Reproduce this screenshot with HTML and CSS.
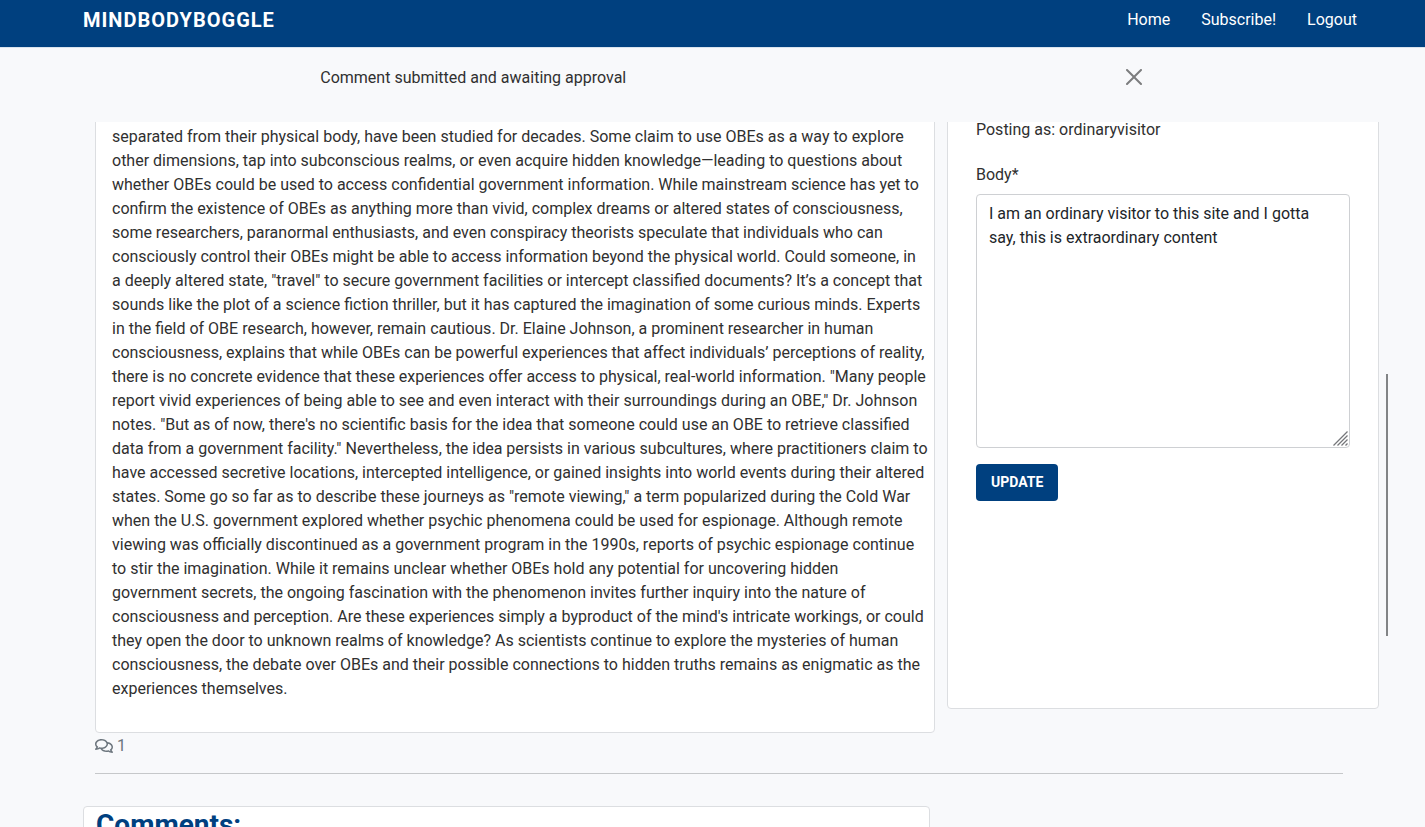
FILE: index.html
```html
<!DOCTYPE html>
<html lang="en">
<head>
<meta charset="utf-8">
<meta name="viewport" content="width=device-width, initial-scale=1">
<title>MINDBODYBOGGLE</title>
<link rel="stylesheet" href="styles.css">
</head>
<body>
<header class="navbar">
  <a class="brand" href="#">MINDBODYBOGGLE</a>
  <nav class="nav-links">
    <a href="#">Home</a>
    <a href="#">Subscribe!</a>
    <a href="#">Logout</a>
  </nav>
</header>
<div class="alert" role="alert">
  <span>Comment submitted and awaiting approval</span>
  <button class="close" type="button" aria-label="Close">
    <svg width="16" height="16" viewBox="0 0 16 16" fill="currentColor"><path d="M.293.293a1 1 0 0 1 1.414 0L8 6.586 14.293.293a1 1 0 1 1 1.414 1.414L9.414 8l6.293 6.293a1 1 0 0 1-1.414 1.414L8 9.414l-6.293 6.293a1 1 0 0 1-1.414-1.414L6.586 8 .293 1.707a1 1 0 0 1 0-1.414z"/></svg>
  </button>
</div>
<main class="content">
  <div class="columns">
    <article class="card post">
      <p>separated from their physical body, have been studied for decades. Some claim to use OBEs as a way to explore<br>
      other dimensions, tap into subconscious realms, or even acquire hidden knowledge—leading to questions about<br>
      whether OBEs could be used to access confidential government information. While mainstream science has yet to<br>
      confirm the existence of OBEs as anything more than vivid, complex dreams or altered states of consciousness,<br>
      some researchers, paranormal enthusiasts, and even conspiracy theorists speculate that individuals who can<br>
      consciously control their OBEs might be able to access information beyond the physical world. Could someone, in<br>
      a deeply altered state, "travel" to secure government facilities or intercept classified documents? It’s a concept that<br>
      sounds like the plot of a science fiction thriller, but it has captured the imagination of some curious minds. Experts<br>
      in the field of OBE research, however, remain cautious. Dr. Elaine Johnson, a prominent researcher in human<br>
      consciousness, explains that while OBEs can be powerful experiences that affect individuals’ perceptions of reality,<br>
      there is no concrete evidence that these experiences offer access to physical, real-world information. "Many people<br>
      report vivid experiences of being able to see and even interact with their surroundings during an OBE," Dr. Johnson<br>
      notes. "But as of now, there's no scientific basis for the idea that someone could use an OBE to retrieve classified<br>
      data from a government facility." Nevertheless, the idea persists in various subcultures, where practitioners claim to<br>
      have accessed secretive locations, intercepted intelligence, or gained insights into world events during their altered<br>
      states. Some go so far as to describe these journeys as "remote viewing," a term popularized during the Cold War<br>
      when the U.S. government explored whether psychic phenomena could be used for espionage. Although remote<br>
      viewing was officially discontinued as a government program in the 1990s, reports of psychic espionage continue<br>
      to stir the imagination. While it remains unclear whether OBEs hold any potential for uncovering hidden<br>
      government secrets, the ongoing fascination with the phenomenon invites further inquiry into the nature of<br>
      consciousness and perception. Are these experiences simply a byproduct of the mind's intricate workings, or could<br>
      they open the door to unknown realms of knowledge? As scientists continue to explore the mysteries of human<br>
      consciousness, the debate over OBEs and their possible connections to hidden truths remains as enigmatic as the<br>
      experiences themselves.</p>
    </article>
    <form class="card comment-form">
      <p class="posting-as">Posting as: ordinaryvisitor</p>
      <label for="body">Body*</label>
      <div class="field">
        <textarea id="body" rows="10">I am an ordinary visitor to this site and I gotta say, this is extraordinary content</textarea>
        <svg class="grip" width="15" height="15" viewBox="0 0 15 15" fill="none" stroke="#75767a" stroke-width="1.3" aria-hidden="true"><path d="M.5 14.500 14.500.5M4.500 14.500l10-10M8.500 14.500l6-6M12.500 14.500l2-2"/></svg>
      </div>
      <button class="update" type="button">UPDATE</button>
    </form>
  </div>
  <div class="comment-count">
    <svg width="18" height="16" viewBox="0 0 576 512" fill="currentColor" aria-hidden="true"><path d="M532 386.2c27.5-27.1 44-61.1 44-98.2 0-80-76.5-146.1-176.2-157.9C368.3 72.5 294.3 32 208 32 93.1 32 0 103.6 0 192c0 37 16.5 71 44 98.2-15.3 30.7-37.3 54.5-37.7 54.9-6.3 6.7-8.1 16.5-4.4 25 3.6 8.5 12 14 21.2 14 53.5 0 96.7-20.2 125.2-38.8 9.2 2.1 18.7 3.7 28.4 4.9C208.1 407.6 281.8 448 368 448c20.8 0 40.8-2.4 59.8-6.8C456.3 459.7 499.4 480 553 480c9.2 0 17.5-5.5 21.2-14 3.6-8.5 1.9-18.3-4.4-25-.4-.3-22.5-24.1-37.8-54.8zm-392.8-92.3L122.1 305c-14.1 9.1-28.5 16.3-43.1 21.4 2.7-4.7 5.4-9.7 8-14.8l15.5-31.1L77.7 256C64.2 242.6 48 220.7 48 192c0-60.7 73.3-112 160-112s160 51.3 160 112-73.3 112-160 112c-16.5 0-33-1.9-49-5.6l-19.8-4.5zM498.3 352l-24.7 24.4 15.5 31.1c2.6 5.1 5.3 10.1 8 14.8-14.6-5.1-29-12.3-43.1-21.4l-17.1-11.1-19.9 4.6c-16 3.7-32.5 5.6-49 5.6-54 0-102.2-20.1-131.3-49.7C338 339.5 416 272.9 416 192c0-3.4-.4-6.7-.7-10C479.7 196.5 528 238.8 528 288c0 28.7-16.2 50.6-29.7 64z"/></svg>
    <span>1</span>
  </div>
  <hr class="divider">
  <section class="card comments">
    <h3>Comments:</h3>
  </section>
  <div class="scroll-thumb"></div>
</main>
</body>
</html>
```
FILE: styles.css
```css
* { box-sizing: border-box; }

body {
  margin: 0;
  height: 100vh;
  display: flex;
  flex-direction: column;
  overflow: hidden;
  background: #f8f9fb;
  color: #303030;
  font: 16px/24px Roboto, sans-serif;
}

.navbar {
  display: flex;
  align-items: center;
  justify-content: space-between;
  padding: 8px 68px 15px 83px;
  border-bottom: 1px solid #d9e3ee;
  background: #00407f;
}

.navbar a {
  color: #fff;
  text-decoration: none;
}

.navbar .brand {
  font-size: 20px;
  line-height: 22px;
  font-weight: 700;
  letter-spacing: 1px;
}

.nav-links {
  display: flex;
  gap: 31px;
}

.alert {
  display: flex;
  align-items: center;
  justify-content: space-between;
  margin: 0 19% 0 21%;
  padding: 18px 12px 32px 21px;
}

.close {
  display: flex;
  padding: 0 0 2px;
  border: 0;
  background: none;
  color: #7c7d7e;
}

.content {
  position: relative;
  flex: 1;
  min-height: 0;
  overflow: hidden;
  padding: 0 46px 0 95px;
}

/* The columns are scrolled partly under the alert. */
.columns {
  display: grid;
  grid-template-columns: minmax(0, 840fr) minmax(0, 432fr);
  align-items: start;
  gap: 12px;
  margin-top: -15px;
}

.card {
  border: 1px solid #dcdee1;
  border-radius: 4px;
  background: #fff;
}

.post { padding: 17px 16px 15px; }

.post p {
  margin: 0 0 16px;
  white-space: nowrap;
}

.comment-form {
  display: flex;
  flex-direction: column;
  align-items: flex-start;
  min-height: 602px;
  padding: 10px 28px;
}

.posting-as { margin: 0 0 21px; }

.comment-form label { margin-bottom: 7px; }

.field {
  position: relative;
  width: 100%;
  margin-bottom: 16px;
}

.field textarea {
  display: block;
  width: 100%;
  margin: 0;
  padding: 7px 12px 5px;
  border: 1px solid #ced0d3;
  border-radius: 4px;
  background: #fff;
  color: #212529;
  font: inherit;
  resize: none;
}

.grip {
  position: absolute;
  right: 2px;
  bottom: 2px;
  pointer-events: none;
}

.update {
  padding: 8px 15px;
  border: 0;
  border-radius: 4px;
  background: #00407f;
  color: #fff;
  font: 700 14px/21px Roboto, sans-serif;
}

.comment-count {
  display: flex;
  align-items: center;
  gap: 4px;
  margin-top: 1px;
  color: #6c757d;
}

.divider {
  height: 1px;
  margin: 15px 36px 32px 0;
  border: 0;
  background: #c6c8ca;
}

.comments {
  width: 66%;
  margin-left: -12px;
  padding: 1px 12px 16px;
}

.comments h3 {
  margin: 0;
  color: #00407f;
  font-size: 28px;
  line-height: 34px;
}

.scroll-thumb {
  position: absolute;
  top: 252px;
  right: 37px;
  width: 2px;
  height: 262px;
  background: #828486;
}
```
